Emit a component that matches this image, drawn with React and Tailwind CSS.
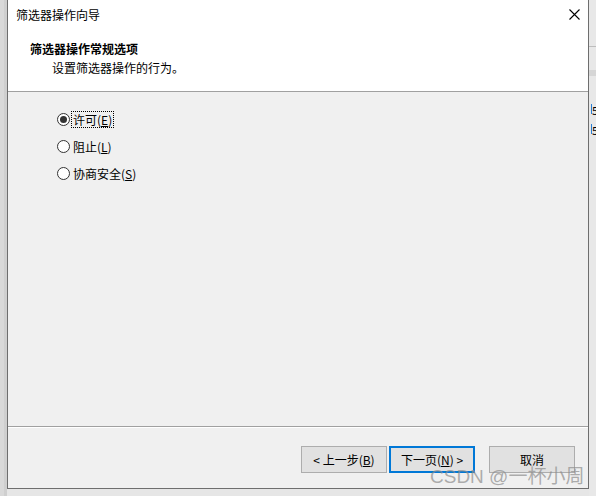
const font = { fontFamily: '"Noto Sans CJK SC", "Noto Sans", sans-serif' }

function Radio({ checked, label, mn, focused }) {
  return (
    <div className="flex items-center h-[27px]">
      <span className="w-[13px] h-[13px] rounded-full border border-[#333333] bg-white flex items-center justify-center">
        {checked && <span className="w-[7px] h-[7px] rounded-full bg-[#333333]" />}
      </span>
      <span className={`ml-[2px] px-[1px] leading-[15px] text-[12px] text-black ${focused ? 'outline outline-1 outline-dotted outline-black' : ''}`}>
        {label}(<span className="underline">{mn}</span>)
      </span>
    </div>
  )
}

function Btn({ children, primary }) {
  return (
    <button
      className={`w-[86px] h-[27px] bg-[#e1e1e1] text-[12px] text-black flex items-center justify-center ${primary ? 'border-2 border-[#0078d7]' : 'border border-[#adadad]'}`}
    >
      {children}
    </button>
  )
}

export default function App() {
  return (
    <div className="w-[596px] h-[496px] bg-[#e6e6e6] overflow-hidden relative flex" style={font}>
      <div className="w-[4px] h-full bg-[#d9d9d9]" />
      <div className="w-[3px] h-full bg-[#cfcfcf]" />
      <div className="w-[582px] h-[489px] flex flex-col border-l border-r border-b border-[#6e6e6e] bg-[#f0f0f0] relative z-10">
        <div className="h-[92px] bg-white border-b border-[#a0a0a0] relative shrink-0">
          <div className="pt-[7px] pl-[8px] text-[12px] text-black leading-[16px]">筛选器操作向导</div>
          <button className="absolute right-[6px] top-[6px] w-[16px] h-[16px] flex items-center justify-center">
            <svg width="11" height="11" viewBox="0 0 11 11">
              <path d="M0.5 0.5 L10.5 10.5 M10.5 0.5 L0.5 10.5" stroke="#000" strokeWidth="1.1" />
            </svg>
          </button>
          <div className="pl-[22px] mt-[18px] text-[12px] font-bold text-black leading-[16px]">筛选器操作常规选项</div>
          <div className="pl-[44px] mt-[3px] text-[12px] text-black leading-[16px]">设置筛选器操作的行为。</div>
        </div>
        <div className="flex-1 pl-[49px] pt-[14px]">
          <Radio checked focused label="许可" mn="E" />
          <Radio label="阻止" mn="L" />
          <Radio label="协商安全" mn="S" />
        </div>
        <div className="h-[1px] bg-[#a0a0a0]" />
        <div className="h-[1px] bg-white" />
        <div className="h-[60px] shrink-0 flex items-start pt-[18px] pl-[293px]">
          <Btn>&lt; 上一步(<span className="underline">B</span>)</Btn>
          <div className="w-[2px]" />
          <Btn primary>下一页(<span className="underline">N</span>) &gt;</Btn>
          <div className="w-[14px]" />
          <Btn>取消</Btn>
        </div>
      </div>
      <div className="flex-1 h-full bg-[#e8e8e8] relative">
        <div className="absolute left-0 right-0 top-[46px] h-[1px] bg-[#bdbdbd]" />
        <div className="absolute left-0 right-0 top-[70px] h-[6px] bg-[#d6d6d6]" />
        <div className="absolute left-[2px] top-[104px] w-[1px] h-[10px] bg-[#2a7fd4]" />
        <div className="absolute left-[3px] top-[102px] text-[11px] text-black">5</div>
        <div className="absolute left-[2px] top-[124px] w-[1px] h-[10px] bg-[#2a7fd4]" />
        <div className="absolute left-[3px] top-[122px] text-[11px] text-black">5</div>
      </div>
      <div
        className="absolute left-[430px] top-[463px] z-20 text-[19px] leading-[28px] text-[#8c8c8c]/70 whitespace-nowrap pointer-events-none"
        style={{ fontFamily: '"Liberation Sans", "Noto Sans CJK SC", sans-serif' }}
      >
        CSDN @一杯小周
      </div>
    </div>
  )
}
